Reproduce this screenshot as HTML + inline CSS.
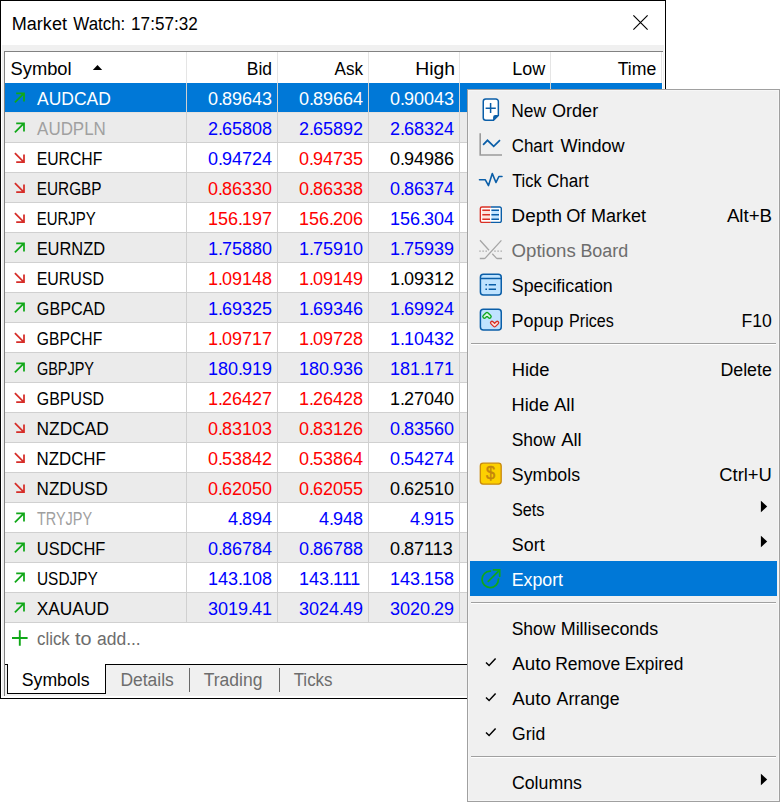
<!DOCTYPE html>
<html><head><meta charset="utf-8"><title>Market Watch</title>
<style>
html,body{margin:0;padding:0;background:#fff;}
body{width:780px;height:802px;position:relative;overflow:hidden;font-family:"Liberation Sans", sans-serif;}
#s div,#s svg,#t span{position:absolute;display:block;}
#t span{white-space:pre;line-height:24px;height:24px;transform-origin:0 0;font-size:18px;}
#t i{font-style:normal;letter-spacing:-1px;}
</style></head><body>
<div id="s">
<div style="left:0px;top:0px;width:666px;height:699px;background:#000"></div>
<div style="left:1px;top:1px;width:664px;height:697px;background:#fff"></div>
<div style="left:2px;top:45px;width:662px;height:651px;background:#f0f0f0"></div>
<div style="left:4px;top:51px;width:659px;height:645px;background:#828282"></div>
<div style="left:5px;top:52px;width:658px;height:612px;background:#fff"></div>
<div style="left:186px;top:52px;width:1px;height:31px;background:#e5e5e5"></div>
<div style="left:277px;top:52px;width:1px;height:31px;background:#e5e5e5"></div>
<div style="left:368px;top:52px;width:1px;height:31px;background:#e5e5e5"></div>
<div style="left:459px;top:52px;width:1px;height:31px;background:#e5e5e5"></div>
<div style="left:550px;top:52px;width:1px;height:31px;background:#e5e5e5"></div>
<div style="left:661px;top:52px;width:1px;height:31px;background:#e5e5e5"></div>
<div style="left:5px;top:83px;width:657px;height:29px;background:#0078d7"></div>
<div style="left:5px;top:112px;width:657px;height:1px;background:#e6e2df"></div>
<div style="left:5px;top:113px;width:657px;height:29px;background:#ebebeb"></div>
<div style="left:5px;top:142px;width:657px;height:1px;background:#d0d0d0"></div>
<div style="left:5px;top:143px;width:657px;height:29px;background:#ffffff"></div>
<div style="left:5px;top:172px;width:657px;height:1px;background:#d0d0d0"></div>
<div style="left:5px;top:173px;width:657px;height:29px;background:#ebebeb"></div>
<div style="left:5px;top:202px;width:657px;height:1px;background:#d0d0d0"></div>
<div style="left:5px;top:203px;width:657px;height:29px;background:#ffffff"></div>
<div style="left:5px;top:232px;width:657px;height:1px;background:#d0d0d0"></div>
<div style="left:5px;top:233px;width:657px;height:29px;background:#ebebeb"></div>
<div style="left:5px;top:262px;width:657px;height:1px;background:#d0d0d0"></div>
<div style="left:5px;top:263px;width:657px;height:29px;background:#ffffff"></div>
<div style="left:5px;top:292px;width:657px;height:1px;background:#d0d0d0"></div>
<div style="left:5px;top:293px;width:657px;height:29px;background:#ebebeb"></div>
<div style="left:5px;top:322px;width:657px;height:1px;background:#d0d0d0"></div>
<div style="left:5px;top:323px;width:657px;height:29px;background:#ffffff"></div>
<div style="left:5px;top:352px;width:657px;height:1px;background:#d0d0d0"></div>
<div style="left:5px;top:353px;width:657px;height:29px;background:#ebebeb"></div>
<div style="left:5px;top:382px;width:657px;height:1px;background:#d0d0d0"></div>
<div style="left:5px;top:383px;width:657px;height:29px;background:#ffffff"></div>
<div style="left:5px;top:412px;width:657px;height:1px;background:#d0d0d0"></div>
<div style="left:5px;top:413px;width:657px;height:29px;background:#ebebeb"></div>
<div style="left:5px;top:442px;width:657px;height:1px;background:#d0d0d0"></div>
<div style="left:5px;top:443px;width:657px;height:29px;background:#ffffff"></div>
<div style="left:5px;top:472px;width:657px;height:1px;background:#d0d0d0"></div>
<div style="left:5px;top:473px;width:657px;height:29px;background:#ebebeb"></div>
<div style="left:5px;top:502px;width:657px;height:1px;background:#d0d0d0"></div>
<div style="left:5px;top:503px;width:657px;height:29px;background:#ffffff"></div>
<div style="left:5px;top:532px;width:657px;height:1px;background:#d0d0d0"></div>
<div style="left:5px;top:533px;width:657px;height:29px;background:#ebebeb"></div>
<div style="left:5px;top:562px;width:657px;height:1px;background:#d0d0d0"></div>
<div style="left:5px;top:563px;width:657px;height:29px;background:#ffffff"></div>
<div style="left:5px;top:592px;width:657px;height:1px;background:#d0d0d0"></div>
<div style="left:5px;top:593px;width:657px;height:29px;background:#ebebeb"></div>
<div style="left:5px;top:622px;width:657px;height:1px;background:#d0d0d0"></div>
<div style="left:186px;top:83px;width:1px;height:540px;background:#d0d0d0"></div>
<div style="left:277px;top:83px;width:1px;height:540px;background:#d0d0d0"></div>
<div style="left:368px;top:83px;width:1px;height:540px;background:#d0d0d0"></div>
<div style="left:459px;top:83px;width:1px;height:540px;background:#d0d0d0"></div>
<div style="left:550px;top:83px;width:1px;height:540px;background:#d0d0d0"></div>
<div style="left:5px;top:664px;width:658px;height:1px;background:#000"></div>
<div style="left:5px;top:665px;width:658px;height:31px;background:#f0f0f0"></div>
<div style="left:5px;top:696px;width:658px;height:1px;background:#fff"></div>
<div style="left:7px;top:664px;width:99px;height:30px;background:#000"></div>
<div style="left:8px;top:664px;width:97px;height:29px;background:#fff"></div>
<div style="left:189px;top:668px;width:1px;height:24px;background:#696969"></div>
<div style="left:279px;top:668px;width:1px;height:24px;background:#696969"></div>
<div style="left:467px;top:89px;width:313px;height:713px;background:#a0a0a0"></div>
<div style="left:468px;top:90px;width:311px;height:711px;background:#f6f6f6"></div>
<div style="left:469px;top:91px;width:309px;height:709px;background:#f0f0f0"></div>
<div style="left:471px;top:343px;width:305px;height:1px;background:#a0a0a0"></div>
<div style="left:471px;top:344px;width:305px;height:1px;background:#fff"></div>
<svg style="left:760px;top:500px" width="8" height="13" viewBox="0 0 8 13"><path d="M0.9 0.7 L7.2 6.5 L0.9 12.3 Z" fill="#000"/></svg>
<svg style="left:760px;top:535px" width="8" height="13" viewBox="0 0 8 13"><path d="M0.9 0.7 L7.2 6.5 L0.9 12.3 Z" fill="#000"/></svg>
<div style="left:470px;top:561px;width:307px;height:35px;background:#0078d7"></div>
<div style="left:471px;top:602px;width:305px;height:1px;background:#a0a0a0"></div>
<div style="left:471px;top:603px;width:305px;height:1px;background:#fff"></div>
<svg style="left:484px;top:656px" width="14" height="12" viewBox="0 0 14 12"><path d="M2 6.5 L5.1 9.5 L11.6 2.6" fill="none" stroke="#000" stroke-width="1.5"/></svg>
<svg style="left:484px;top:691px" width="14" height="12" viewBox="0 0 14 12"><path d="M2 6.5 L5.1 9.5 L11.6 2.6" fill="none" stroke="#000" stroke-width="1.5"/></svg>
<svg style="left:484px;top:726px" width="14" height="12" viewBox="0 0 14 12"><path d="M2 6.5 L5.1 9.5 L11.6 2.6" fill="none" stroke="#000" stroke-width="1.5"/></svg>
<div style="left:471px;top:756px;width:305px;height:1px;background:#a0a0a0"></div>
<div style="left:471px;top:757px;width:305px;height:1px;background:#fff"></div>
<svg style="left:760px;top:773px" width="8" height="13" viewBox="0 0 8 13"><path d="M0.9 0.7 L7.2 6.5 L0.9 12.3 Z" fill="#000"/></svg>
<svg style="left:92px;top:64px" width="12" height="7" viewBox="0 0 12 7"><path d="M0.8 6 L5.5 1 L10.2 6 Z" fill="#000"/></svg>
<svg style="left:630px;top:12px" width="22" height="22" viewBox="0 0 22 22"><path d="M3.4 3.4 L17.6 17.6 M17.6 3.4 L3.4 17.6" stroke="#000" stroke-width="1.15" fill="none"/></svg>
<svg style="left:12px;top:89px" width="16" height="18" viewBox="0 0 16 18"><path d="M2.9 13.3 L11.6 4.6 M4.2 4.25 H12 V12.4" stroke="#10a818" stroke-width="1.75" fill="none" stroke-linejoin="miter"/></svg>
<svg style="left:12px;top:119px" width="16" height="18" viewBox="0 0 16 18"><path d="M2.9 13.3 L11.6 4.6 M4.2 4.25 H12 V12.4" stroke="#10a818" stroke-width="1.75" fill="none" stroke-linejoin="miter"/></svg>
<svg style="left:12px;top:149px" width="16" height="18" viewBox="0 0 16 18"><path d="M2.9 4.2 L11.6 12.9 M4.2 13 H12 V5.4" stroke="#d62d28" stroke-width="1.75" fill="none" stroke-linejoin="miter"/></svg>
<svg style="left:12px;top:179px" width="16" height="18" viewBox="0 0 16 18"><path d="M2.9 4.2 L11.6 12.9 M4.2 13 H12 V5.4" stroke="#d62d28" stroke-width="1.75" fill="none" stroke-linejoin="miter"/></svg>
<svg style="left:12px;top:209px" width="16" height="18" viewBox="0 0 16 18"><path d="M2.9 4.2 L11.6 12.9 M4.2 13 H12 V5.4" stroke="#d62d28" stroke-width="1.75" fill="none" stroke-linejoin="miter"/></svg>
<svg style="left:12px;top:239px" width="16" height="18" viewBox="0 0 16 18"><path d="M2.9 13.3 L11.6 4.6 M4.2 4.25 H12 V12.4" stroke="#10a818" stroke-width="1.75" fill="none" stroke-linejoin="miter"/></svg>
<svg style="left:12px;top:269px" width="16" height="18" viewBox="0 0 16 18"><path d="M2.9 4.2 L11.6 12.9 M4.2 13 H12 V5.4" stroke="#d62d28" stroke-width="1.75" fill="none" stroke-linejoin="miter"/></svg>
<svg style="left:12px;top:299px" width="16" height="18" viewBox="0 0 16 18"><path d="M2.9 13.3 L11.6 4.6 M4.2 4.25 H12 V12.4" stroke="#10a818" stroke-width="1.75" fill="none" stroke-linejoin="miter"/></svg>
<svg style="left:12px;top:329px" width="16" height="18" viewBox="0 0 16 18"><path d="M2.9 4.2 L11.6 12.9 M4.2 13 H12 V5.4" stroke="#d62d28" stroke-width="1.75" fill="none" stroke-linejoin="miter"/></svg>
<svg style="left:12px;top:359px" width="16" height="18" viewBox="0 0 16 18"><path d="M2.9 13.3 L11.6 4.6 M4.2 4.25 H12 V12.4" stroke="#10a818" stroke-width="1.75" fill="none" stroke-linejoin="miter"/></svg>
<svg style="left:12px;top:389px" width="16" height="18" viewBox="0 0 16 18"><path d="M2.9 4.2 L11.6 12.9 M4.2 13 H12 V5.4" stroke="#d62d28" stroke-width="1.75" fill="none" stroke-linejoin="miter"/></svg>
<svg style="left:12px;top:419px" width="16" height="18" viewBox="0 0 16 18"><path d="M2.9 4.2 L11.6 12.9 M4.2 13 H12 V5.4" stroke="#d62d28" stroke-width="1.75" fill="none" stroke-linejoin="miter"/></svg>
<svg style="left:12px;top:449px" width="16" height="18" viewBox="0 0 16 18"><path d="M2.9 4.2 L11.6 12.9 M4.2 13 H12 V5.4" stroke="#d62d28" stroke-width="1.75" fill="none" stroke-linejoin="miter"/></svg>
<svg style="left:12px;top:479px" width="16" height="18" viewBox="0 0 16 18"><path d="M2.9 4.2 L11.6 12.9 M4.2 13 H12 V5.4" stroke="#d62d28" stroke-width="1.75" fill="none" stroke-linejoin="miter"/></svg>
<svg style="left:12px;top:509px" width="16" height="18" viewBox="0 0 16 18"><path d="M2.9 13.3 L11.6 4.6 M4.2 4.25 H12 V12.4" stroke="#10a818" stroke-width="1.75" fill="none" stroke-linejoin="miter"/></svg>
<svg style="left:12px;top:539px" width="16" height="18" viewBox="0 0 16 18"><path d="M2.9 13.3 L11.6 4.6 M4.2 4.25 H12 V12.4" stroke="#10a818" stroke-width="1.75" fill="none" stroke-linejoin="miter"/></svg>
<svg style="left:12px;top:569px" width="16" height="18" viewBox="0 0 16 18"><path d="M2.9 13.3 L11.6 4.6 M4.2 4.25 H12 V12.4" stroke="#10a818" stroke-width="1.75" fill="none" stroke-linejoin="miter"/></svg>
<svg style="left:12px;top:599px" width="16" height="18" viewBox="0 0 16 18"><path d="M2.9 13.3 L11.6 4.6 M4.2 4.25 H12 V12.4" stroke="#10a818" stroke-width="1.75" fill="none" stroke-linejoin="miter"/></svg>
<svg style="left:10px;top:628px" width="20" height="20" viewBox="0 0 20 20"><path d="M2 10 H17.6 M9.8 2.2 V17.8" stroke="#10a818" stroke-width="1.9" fill="none"/></svg>
<svg style="left:478px;top:95px" width="26" height="30" viewBox="478 95 26 30"><path d="M485.75 98.95 H495.85 A2.5 2.5 0 0 1 498.35 101.45 V115.4 L493.5 120.15 H485.75 A2.5 2.5 0 0 1 483.25 117.65 V101.45 A2.5 2.5 0 0 1 485.75 98.95 Z" fill="#fff" stroke="#0a5ea8" stroke-width="1.5"/>
<path d="M493.1 120.2 V117.2 A2.2 2.2 0 0 1 495.3 115 H498.6 Z" fill="#0a5ea8"/>
<path d="M485.6 108.2 H495.8 M490.6 103 V113.1" stroke="#0a5ea8" stroke-width="1.5" fill="none"/></svg>
<svg style="left:476px;top:130px" width="30" height="30" viewBox="476 130 30 30"><path d="M480.2 133.3 V155 H502" stroke="#9a9a9a" stroke-width="1.6" fill="none"/>
<path d="M483.1 144.8 L487.5 140.3 L493.7 146.3 L500 140.2" stroke="#0a5ea8" stroke-width="1.7" fill="none" stroke-linejoin="miter"/></svg>
<svg style="left:476px;top:165px" width="30" height="30" viewBox="476 165 30 30"><path d="M479.5 179.7 H485.2 L488.5 185.6 L492.3 173.6 L496 182.5 L498.9 176.5 H502" stroke="#0a5ea8" stroke-width="1.6" fill="none" stroke-linejoin="round" stroke-linecap="round"/></svg>
<svg style="left:476px;top:200px" width="30" height="30" viewBox="476 200 30 30"><rect x="480.35" y="207" width="20.95" height="15.4" rx="1.6" fill="#fff"/>
<rect x="482.3" y="209.6" width="7.7" height="10.3" fill="#fde3dc"/><rect x="491.4" y="209.6" width="7.6" height="10.3" fill="#c4e6ff"/>
<path d="M490.8 207 H481.95 A1.6 1.6 0 0 0 480.35 208.6 V220.8 A1.6 1.6 0 0 0 481.95 222.4 H490.8" stroke="#d93025" stroke-width="1.4" fill="none"/>
<path d="M490.8 207 H499.7 A1.6 1.6 0 0 1 501.3 208.6 V220.8 A1.6 1.6 0 0 1 499.7 222.4 H490.8" stroke="#0a5ea8" stroke-width="1.4" fill="none"/>
<path d="M482.3 210.3 H490 M482.3 214.7 H490 M482.3 219.2 H490" stroke="#d93025" stroke-width="1.5"/>
<path d="M491.4 210.3 H499 M491.4 214.7 H499 M491.4 219.2 H499" stroke="#0a5ea8" stroke-width="1.5"/></svg>
<svg style="left:476px;top:235px" width="30" height="30" viewBox="476 235 30 30"><path d="M501.4 240.4 L485.2 258.1 Q484.8 258.5 484.2 258.5 H479.8" stroke="#a6a6a6" stroke-width="1.3" fill="none"/>
<path d="M480 240.2 L489 250.2 M492.3 253.8 L496.4 258.1 Q496.8 258.5 497.4 258.5 H502" stroke="#a6a6a6" stroke-width="1.3" fill="none"/>
<path d="M479.3 251.1 H487.5 M494.3 251.1 H502.5" stroke="#a6a6a6" stroke-width="1.35" stroke-dasharray="1.4 1.7" fill="none"/></svg>
<svg style="left:476px;top:270px" width="30" height="30" viewBox="476 270 30 30"><rect x="480.4" y="274.25" width="20.85" height="20.8" rx="3" fill="#bfe3ff" stroke="#0a5ea8" stroke-width="1.5"/>
<path d="M480.4 278.5 H501.2" stroke="#0a5ea8" stroke-width="1.5"/>
<path d="M485.4 284.7 H487 M485.4 289.2 H487" stroke="#0a5ea8" stroke-width="1.6"/>
<path d="M488.7 284.7 H496 M488.7 289.2 H496" stroke="#0a5ea8" stroke-width="1.5"/></svg>
<svg style="left:476px;top:305px" width="30" height="30" viewBox="476 305 30 30"><rect x="480.4" y="309.25" width="20.85" height="20.8" rx="3" fill="#bfe3ff" stroke="#0a5ea8" stroke-width="1.5"/>
<path d="M484.4 316.6 L487 314 L489.6 316.6" stroke="#12a821" stroke-width="4.4" fill="none" stroke-linecap="round" stroke-linejoin="round"/>
<path d="M484.4 316.6 L487 314 L489.6 316.6" stroke="#dcf7e2" stroke-width="1.7" fill="none" stroke-linecap="round" stroke-linejoin="round"/>
<path d="M492 322.8 L494.6 325.3 L497.2 322.8" stroke="#d93025" stroke-width="4.2" fill="none" stroke-linecap="round" stroke-linejoin="round"/>
<path d="M492 322.8 L494.6 325.3 L497.2 322.8" stroke="#ffe3de" stroke-width="1.6" fill="none" stroke-linecap="round" stroke-linejoin="round"/></svg>
<svg style="left:476px;top:459px" width="30" height="30" viewBox="476 459 30 30"><rect x="480.3" y="463.15" width="20.9" height="21" rx="2.8" fill="#fdd000" stroke="#c8890c" stroke-width="1.3"/>
<text transform="translate(490.6 479.1) scale(0.93 1)" x="0" y="0" font-family="Liberation Sans, sans-serif" font-size="17.6" text-anchor="middle" fill="#c4850c" stroke="#c4850c" stroke-width="0.5">$</text></svg>
<svg style="left:476px;top:564px" width="30" height="30" viewBox="476 564 30 30"><path d="M490.4 571.2 A8.2 8.2 0 1 0 498.4 579.2" stroke="#10a818" stroke-width="1.7" fill="none" stroke-linecap="round"/>
<path d="M488.2 581.4 L499.3 570.3 M493.4 569.9 H499.7 V576.2" stroke="#10a818" stroke-width="1.7" fill="none" stroke-linecap="round"/></svg>
</div>
<div id="t">
<span style="left:11px;top:11.76px;color:#000;transform:translateX(0.80px) scaleX(1.0019)">Market</span>
<span style="left:73px;top:11.76px;color:#000;transform:translateX(0.30px) scaleX(0.9395)">Watch:</span>
<span style="left:131px;top:11.76px;color:#000;transform:translateX(0.11px) scaleX(0.9500)">17:57:32</span>
<span style="left:10px;top:56.76px;color:#000;transform:translateX(0.54px) scaleX(1.0172)">Symbol</span>
<span style="left:246px;top:56.76px;color:#000;transform:translateX(0.74px) scaleX(0.9702)">Bid</span>
<span style="left:334px;top:56.76px;color:#000;transform:translateX(0.60px) scaleX(0.9467)">Ask</span>
<span style="left:415px;top:56.76px;color:#000;transform:translateX(0.19px) scaleX(1.0754)">High</span>
<span style="left:512px;top:56.76px;color:#000;transform:translateX(0.30px) scaleX(1.0000)">Low</span>
<span style="left:617px;top:56.76px;color:#000;transform:translateX(0.75px) scaleX(0.9804)">Time</span>
<span style="left:37px;top:86.76px;color:#fff;transform:translateX(0.10px) scaleX(0.9688)">AUDCAD</span>
<span style="left:207.94px;top:86.76px;color:#fff">0<i>.</i>89643</span>
<span style="left:298.94px;top:86.76px;color:#fff">0<i>.</i>89664</span>
<span style="left:389.94px;top:86.76px;color:#fff">0<i>.</i>90043</span>
<span style="left:37px;top:116.76px;color:#a0a0a0;transform:translateX(0.10px) scaleX(0.9413)">AUDPLN</span>
<span style="left:207.94px;top:116.76px;color:#0000ff">2<i>.</i>65808</span>
<span style="left:298.94px;top:116.76px;color:#0000ff">2<i>.</i>65892</span>
<span style="left:389.94px;top:116.76px;color:#0000ff">2<i>.</i>68324</span>
<span style="left:36px;top:146.76px;color:#000;transform:translateX(0.69px) scaleX(0.8742)">EURCHF</span>
<span style="left:207.94px;top:146.76px;color:#0000ff">0<i>.</i>94724</span>
<span style="left:298.94px;top:146.76px;color:#ff0000">0<i>.</i>94735</span>
<span style="left:389.94px;top:146.76px;color:#000000">0<i>.</i>94986</span>
<span style="left:36px;top:176.76px;color:#000;transform:translateX(0.72px) scaleX(0.8531)">EURGBP</span>
<span style="left:207.94px;top:176.76px;color:#ff0000">0<i>.</i>86330</span>
<span style="left:298.94px;top:176.76px;color:#ff0000">0<i>.</i>86338</span>
<span style="left:389.94px;top:176.76px;color:#0000ff">0<i>.</i>86374</span>
<span style="left:36px;top:206.76px;color:#000;transform:translateX(0.75px) scaleX(0.8319)">EURJPY</span>
<span style="left:207.94px;top:206.76px;color:#ff0000">156<i>.</i>197</span>
<span style="left:298.94px;top:206.76px;color:#ff0000">156<i>.</i>206</span>
<span style="left:389.94px;top:206.76px;color:#0000ff">156<i>.</i>304</span>
<span style="left:36px;top:236.76px;color:#000;transform:translateX(0.63px) scaleX(0.9127)">EURNZD</span>
<span style="left:207.94px;top:236.76px;color:#0000ff">1<i>.</i>75880</span>
<span style="left:298.94px;top:236.76px;color:#0000ff">1<i>.</i>75910</span>
<span style="left:389.94px;top:236.76px;color:#0000ff">1<i>.</i>75939</span>
<span style="left:36px;top:266.76px;color:#000;transform:translateX(0.67px) scaleX(0.8854)">EURUSD</span>
<span style="left:207.94px;top:266.76px;color:#ff0000">1<i>.</i>09148</span>
<span style="left:298.94px;top:266.76px;color:#ff0000">1<i>.</i>09149</span>
<span style="left:389.94px;top:266.76px;color:#000000">1<i>.</i>09312</span>
<span style="left:36px;top:296.76px;color:#000;transform:translateX(0.83px) scaleX(0.8980)">GBPCAD</span>
<span style="left:207.94px;top:296.76px;color:#0000ff">1<i>.</i>69325</span>
<span style="left:298.94px;top:296.76px;color:#0000ff">1<i>.</i>69346</span>
<span style="left:389.94px;top:296.76px;color:#0000ff">1<i>.</i>69924</span>
<span style="left:36px;top:326.76px;color:#000;transform:translateX(0.85px) scaleX(0.8721)">GBPCHF</span>
<span style="left:207.94px;top:326.76px;color:#ff0000">1<i>.</i>09717</span>
<span style="left:298.94px;top:326.76px;color:#ff0000">1<i>.</i>09728</span>
<span style="left:389.94px;top:326.76px;color:#0000ff">1<i>.</i>10432</span>
<span style="left:36px;top:356.76px;color:#000;transform:translateX(0.90px) scaleX(0.8043)">GBPJPY</span>
<span style="left:207.94px;top:356.76px;color:#0000ff">180<i>.</i>919</span>
<span style="left:298.94px;top:356.76px;color:#0000ff">180<i>.</i>936</span>
<span style="left:389.94px;top:356.76px;color:#0000ff">181<i>.</i>171</span>
<span style="left:36px;top:386.76px;color:#000;transform:translateX(0.84px) scaleX(0.8832)">GBPUSD</span>
<span style="left:207.94px;top:386.76px;color:#ff0000">1<i>.</i>26427</span>
<span style="left:298.94px;top:386.76px;color:#ff0000">1<i>.</i>26428</span>
<span style="left:389.94px;top:386.76px;color:#000000">1<i>.</i>27040</span>
<span style="left:36px;top:416.76px;color:#000;transform:translateX(0.55px) scaleX(0.9636)">NZDCAD</span>
<span style="left:207.94px;top:416.76px;color:#ff0000">0<i>.</i>83103</span>
<span style="left:298.94px;top:416.76px;color:#ff0000">0<i>.</i>83126</span>
<span style="left:389.94px;top:416.76px;color:#0000ff">0<i>.</i>83560</span>
<span style="left:36px;top:446.76px;color:#000;transform:translateX(0.60px) scaleX(0.9352)">NZDCHF</span>
<span style="left:207.94px;top:446.76px;color:#ff0000">0<i>.</i>53842</span>
<span style="left:298.94px;top:446.76px;color:#ff0000">0<i>.</i>53864</span>
<span style="left:389.94px;top:446.76px;color:#0000ff">0<i>.</i>54274</span>
<span style="left:36px;top:476.76px;color:#000;transform:translateX(0.58px) scaleX(0.9485)">NZDUSD</span>
<span style="left:207.94px;top:476.76px;color:#ff0000">0<i>.</i>62050</span>
<span style="left:298.94px;top:476.76px;color:#ff0000">0<i>.</i>62055</span>
<span style="left:389.94px;top:476.76px;color:#000000">0<i>.</i>62510</span>
<span style="left:36px;top:506.76px;color:#a0a0a0;transform:translateX(0.90px) scaleX(0.8029)">TRYJPY</span>
<span style="left:227.96px;top:506.76px;color:#0000ff">4<i>.</i>894</span>
<span style="left:318.96px;top:506.76px;color:#0000ff">4<i>.</i>948</span>
<span style="left:409.96px;top:506.76px;color:#0000ff">4<i>.</i>915</span>
<span style="left:36px;top:536.76px;color:#000;transform:translateX(0.86px) scaleX(0.9123)">USDCHF</span>
<span style="left:207.94px;top:536.76px;color:#0000ff">0<i>.</i>86784</span>
<span style="left:298.94px;top:536.76px;color:#0000ff">0<i>.</i>86788</span>
<span style="left:389.94px;top:536.76px;color:#000000">0<i>.</i>87113</span>
<span style="left:36px;top:566.76px;color:#000;transform:translateX(0.93px) scaleX(0.8578)">USDJPY</span>
<span style="left:207.94px;top:566.76px;color:#0000ff">143<i>.</i>108</span>
<span style="left:298.94px;top:566.76px;color:#0000ff">143<i>.</i>111</span>
<span style="left:389.94px;top:566.76px;color:#0000ff">143<i>.</i>158</span>
<span style="left:36px;top:596.76px;color:#000;transform:translateX(0.72px) scaleX(0.9627)">XAUAUD</span>
<span style="left:207.94px;top:596.76px;color:#0000ff">3019<i>.</i>41</span>
<span style="left:298.94px;top:596.76px;color:#0000ff">3024<i>.</i>49</span>
<span style="left:389.94px;top:596.76px;color:#0000ff">3020<i>.</i>29</span>
<span style="left:36px;top:626.76px;color:#6d6d6d;transform:translateX(1.00px) scaleX(0.9343)">click</span>
<span style="left:75px;top:626.76px;color:#6d6d6d;transform:translateX(0.12px) scaleX(1.1000)">to</span>
<span style="left:96px;top:626.76px;color:#6d6d6d;transform:translateX(0.97px) scaleX(0.9708)">add...</span>
<span style="left:21px;top:667.76px;color:#000;transform:translateX(0.76px) scaleX(0.9815)">Symbols</span>
<span style="left:120px;top:667.76px;color:#6d6d6d;transform:translateX(0.45px) scaleX(0.9698)">Details</span>
<span style="left:203px;top:667.76px;color:#6d6d6d;transform:translateX(0.66px) scaleX(0.9729)">Trading</span>
<span style="left:293px;top:667.76px;color:#6d6d6d;transform:translateX(0.66px) scaleX(0.9407)">Ticks</span>
<span style="left:511px;top:98.76px;color:#000;transform:translateX(0.25px) scaleX(0.9652)">New</span>
<span style="left:551px;top:98.76px;color:#000;transform:translateX(0.95px) scaleX(1.0044)">Order</span>
<span style="left:511px;top:133.76px;color:#000;transform:translateX(0.69px) scaleX(0.9410)">Chart</span>
<span style="left:560px;top:133.76px;color:#000;transform:translateX(0.40px) scaleX(1.0031)">Window</span>
<span style="left:512px;top:168.76px;color:#000;transform:translateX(0.17px) scaleX(0.9094)">Tick</span>
<span style="left:546px;top:168.76px;color:#000;transform:translateX(0.99px) scaleX(0.9480)">Chart</span>
<span style="left:511px;top:203.76px;color:#000;transform:translateX(0.53px) scaleX(1.0484)">Depth</span>
<span style="left:566px;top:203.76px;color:#000;transform:translateX(0.14px) scaleX(1.0137)">Of</span>
<span style="left:591px;top:203.76px;color:#000;transform:translateX(0.00px) scaleX(1.0000)">Market</span>
<span style="left:511px;top:238.76px;color:#6d6d6d;transform:translateX(0.62px) scaleX(1.0337)">Options</span>
<span style="left:580px;top:238.76px;color:#6d6d6d;transform:translateX(0.41px) scaleX(0.9956)">Board</span>
<span style="left:511px;top:273.76px;color:#000;transform:translateX(0.86px) scaleX(0.9885)">Specification</span>
<span style="left:511px;top:308.76px;color:#000;transform:translateX(0.60px) scaleX(0.9970)">Popup</span>
<span style="left:569px;top:308.76px;color:#000;transform:translateX(0.06px) scaleX(0.8937)">Prices</span>
<span style="left:511px;top:357.76px;color:#000;transform:translateX(0.67px) scaleX(1.0216)">Hide</span>
<span style="left:511px;top:392.76px;color:#000;transform:translateX(0.58px) scaleX(1.0129)">Hide</span>
<span style="left:554px;top:392.76px;color:#000;transform:translateX(0.00px) scaleX(1.0293)">All</span>
<span style="left:511px;top:427.76px;color:#000;transform:translateX(0.67px) scaleX(0.9718)">Show</span>
<span style="left:561px;top:427.76px;color:#000;transform:translateX(0.20px) scaleX(1.0240)">All</span>
<span style="left:511px;top:462.76px;color:#000;transform:translateX(0.86px) scaleX(0.9875)">Symbols</span>
<span style="left:511px;top:497.76px;color:#000;transform:translateX(0.92px) scaleX(0.9036)">Sets</span>
<span style="left:511px;top:532.76px;color:#000;transform:translateX(0.86px) scaleX(0.9922)">Sort</span>
<span style="left:511px;top:567.76px;color:#fff;transform:translateX(0.72px) scaleX(0.9861)">Export</span>
<span style="left:511px;top:616.76px;color:#000;transform:translateX(0.67px) scaleX(0.9718)">Show</span>
<span style="left:560px;top:616.76px;color:#000;transform:translateX(0.71px) scaleX(0.9948)">Milliseconds</span>
<span style="left:512px;top:651.76px;color:#000;transform:translateX(0.30px) scaleX(1.0428)">Auto</span>
<span style="left:555px;top:651.76px;color:#000;transform:translateX(0.14px) scaleX(0.9714)">Remove</span>
<span style="left:624px;top:651.76px;color:#000;transform:translateX(0.66px) scaleX(0.9607)">Expired</span>
<span style="left:512px;top:686.76px;color:#000;transform:translateX(0.30px) scaleX(1.0428)">Auto</span>
<span style="left:556px;top:686.76px;color:#000;transform:translateX(0.60px) scaleX(0.9818)">Arrange</span>
<span style="left:511px;top:721.76px;color:#000;transform:translateX(0.97px) scaleX(0.9767)">Grid</span>
<span style="left:511px;top:770.76px;color:#000;transform:translateX(0.96px) scaleX(0.9849)">Columns</span>
<span style="left:726px;top:203.76px;color:#000;transform:translateX(0.90px) scaleX(1.0376)">Alt+B</span>
<span style="left:741px;top:308.76px;color:#000;transform:translateX(0.43px) scaleX(0.9774)">F10</span>
<span style="left:720px;top:357.76px;color:#000;transform:translateX(0.42px) scaleX(0.9869)">Delete</span>
<span style="left:719px;top:462.76px;color:#000;transform:translateX(0.23px) scaleX(1.0222)">Ctrl+U</span>
</div>
</body></html>
